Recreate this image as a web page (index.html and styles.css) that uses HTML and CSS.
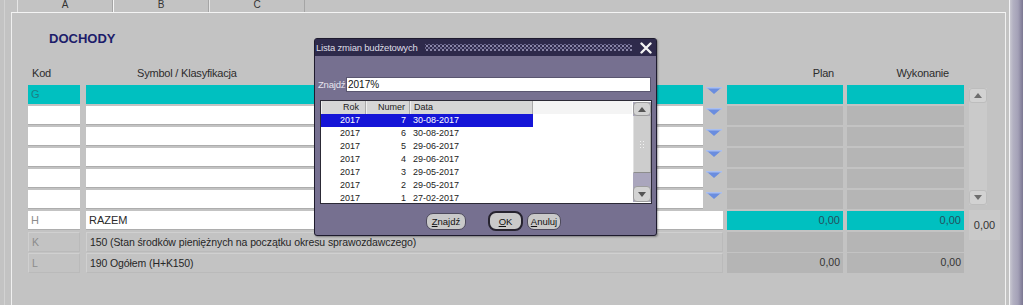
FILE: index.html
```html
<!DOCTYPE html>
<html>
<head>
<meta charset="utf-8">
<link rel="stylesheet" href="styles.css">
</head>
<body>
<div class="page">
  <div class="main">
    <div class="tabs">
      <div class="tab">A</div>
      <div class="tab tab-b">B</div>
      <div class="tab">C</div>
    </div>
    <div class="panel">
      <div class="title">DOCHODY</div>
      <div class="heads">
        <div class="h-kod">Kod</div>
        <div class="h-sym">Symbol / Klasyfikacja</div>
        <div class="h-plan">Plan</div>
        <div class="h-wyk">Wykonanie</div>
      </div>
      <div class="block">
        <div class="rows">
          <div class="row">
            <div class="c kod teal">G</div><div class="c sym teal"></div>
            <div class="arr"><svg width="16" height="7" viewBox="0 0 16 7"><polygon points="0,0 16,0 8,7" class="tri"/><rect x="0" y="0" width="16" height="1.5" fill="#a9bff0"/></svg></div>
            <div class="c plan teal"></div><div class="c wyk teal"></div>
          </div>
          <div class="row">
            <div class="c kod white"></div><div class="c sym white"></div>
            <div class="arr"><svg width="16" height="7" viewBox="0 0 16 7"><polygon points="0,0 16,0 8,7" class="tri"/><rect x="0" y="0" width="16" height="1.5" fill="#a9bff0"/></svg></div>
            <div class="c plan gray"></div><div class="c wyk gray"></div>
          </div>
          <div class="row">
            <div class="c kod white"></div><div class="c sym white"></div>
            <div class="arr"><svg width="16" height="7" viewBox="0 0 16 7"><polygon points="0,0 16,0 8,7" class="tri"/><rect x="0" y="0" width="16" height="1.5" fill="#a9bff0"/></svg></div>
            <div class="c plan gray"></div><div class="c wyk gray"></div>
          </div>
          <div class="row">
            <div class="c kod white"></div><div class="c sym white"></div>
            <div class="arr"><svg width="16" height="7" viewBox="0 0 16 7"><polygon points="0,0 16,0 8,7" class="tri"/><rect x="0" y="0" width="16" height="1.5" fill="#a9bff0"/></svg></div>
            <div class="c plan gray"></div><div class="c wyk gray"></div>
          </div>
          <div class="row">
            <div class="c kod white"></div><div class="c sym white"></div>
            <div class="arr"><svg width="16" height="7" viewBox="0 0 16 7"><polygon points="0,0 16,0 8,7" class="tri"/><rect x="0" y="0" width="16" height="1.5" fill="#a9bff0"/></svg></div>
            <div class="c plan gray"></div><div class="c wyk gray"></div>
          </div>
          <div class="row">
            <div class="c kod white"></div><div class="c sym white"></div>
            <div class="arr"><svg width="16" height="7" viewBox="0 0 16 7"><polygon points="0,0 16,0 8,7" class="tri"/><rect x="0" y="0" width="16" height="1.5" fill="#a9bff0"/></svg></div>
            <div class="c plan gray"></div><div class="c wyk gray"></div>
          </div>
        </div>
        <div class="vscroll">
          <div class="sbtn"><svg width="8" height="5" viewBox="0 0 8 5"><polygon points="0,5 8,5 4,0" fill="#6e6e6e"/></svg></div>
          <div class="strack"></div>
          <div class="sbtn"><svg width="8" height="5" viewBox="0 0 8 5"><polygon points="0,0 8,0 4,5" fill="#6e6e6e"/></svg></div>
        </div>
      </div>
      <div class="row total">
        <div class="c kod white dim">H</div><div class="c sym wide white">RAZEM</div>
        <div class="c plan teal num">0,00</div><div class="c wyk teal num">0,00</div>
        <div class="sum">0,00</div>
      </div>
      <div class="row info">
        <div class="c kod flat dim">K</div><div class="c sym wide flat">150 (Stan środków pieniężnych na początku okresu sprawozdawczego)</div>
        <div class="c plan gray"></div><div class="c wyk gray"></div>
      </div>
      <div class="row info">
        <div class="c kod flat dim">L</div><div class="c sym wide flat">190 Ogółem (H+K150)</div>
        <div class="c plan gray num dark">0,00</div><div class="c wyk gray num dark">0,00</div>
      </div>
    </div>
  </div>
  <div class="rstrip"></div>
</div>

<div class="dialog">
  <div class="dtitle">
    <span class="dtext">Lista zmian budżetowych</span>
    <span class="dots"></span>
    <svg class="close" width="12" height="12" viewBox="0 0 12 12"><path d="M1.5 1.5 L10.5 10.5 M10.5 1.5 L1.5 10.5" stroke="#f4f4f4" stroke-width="2.4" stroke-linecap="round"/></svg>
  </div>
  <div class="findrow">
    <span class="flabel">Znajdź</span>
    <div class="finput">2017%</div>
  </div>
  <div class="list">
    <div class="lcols">
      <div class="lrow lhead">
        <div class="lc rok">Rok</div><div class="lc numer">Numer</div><div class="lc data">Data</div><div class="lc rest"></div>
      </div>
      <div class="lrow sel"><div class="lc rok">2017</div><div class="lc numer">7</div><div class="lc data">30-08-2017</div></div>
      <div class="lrow"><div class="lc rok">2017</div><div class="lc numer">6</div><div class="lc data">30-08-2017</div></div>
      <div class="lrow"><div class="lc rok">2017</div><div class="lc numer">5</div><div class="lc data">29-06-2017</div></div>
      <div class="lrow"><div class="lc rok">2017</div><div class="lc numer">4</div><div class="lc data">29-06-2017</div></div>
      <div class="lrow"><div class="lc rok">2017</div><div class="lc numer">3</div><div class="lc data">29-05-2017</div></div>
      <div class="lrow"><div class="lc rok">2017</div><div class="lc numer">2</div><div class="lc data">29-05-2017</div></div>
      <div class="lrow"><div class="lc rok">2017</div><div class="lc numer">1</div><div class="lc data">27-02-2017</div></div>
    </div>
    <div class="lscroll">
      <div class="lbtn"><svg width="8" height="5" viewBox="0 0 8 5"><polygon points="0,5 8,5 4,0" fill="#555"/></svg></div>
      <div class="lthumb"><span class="grip"></span></div>
      <div class="ltrack"></div>
      <div class="lbtn down"><svg width="8" height="5" viewBox="0 0 8 5"><polygon points="0,0 8,0 4,5" fill="#555"/></svg></div>
    </div>
  </div>
  <div class="btnrow">
    <div class="btn b-find"><u>Z</u>najdź</div>
    <div class="btn b-ok"><u>O</u>K</div>
    <div class="btn b-cancel"><u>A</u>nuluj</div>
  </div>
</div>
</body>
</html>
```

FILE: styles.css
```css
html, body {
  margin: 0;
  padding: 0;
}
body {
  width: 1023px;
  height: 305px;
  overflow: hidden;
  background: #c3c3c3;
  font-family: "Liberation Sans", Arial, sans-serif;
  color: #2a2a2a;
  position: relative;
}
.page {
  display: flex;
  height: 305px;
  background: linear-gradient(to right, transparent 4px, #d2d2d2 4px, #d2d2d2 5px, transparent 5px);
}
.main {
  width: 1009px;
  display: flex;
  flex-direction: column;
}
.rstrip {
  width: 14px;
  background: linear-gradient(to right, #f2f2f4 0px, #f2f2f4 1px, #c9c8d1 1px, #b3b1c2 4px, #a4a1b7 9px, #7b7792 14px);
}
.tabs {
  height: 12px;
  display: flex;
  padding-left: 17px;
}
.tab {
  width: 94px;
  height: 12px;
  border-left: 1px solid #e6e6e6;
  border-right: 1px solid #a5a5a5;
  font-size: 10px;
  line-height: 9px;
  text-align: center;
  color: #333;
  overflow: hidden;
}
.tab-b {
  border-left: 1px solid #f6f6f6;
}
.panel {
  flex: 1;
  margin-left: 11px;
  margin-right: 3px;
  border-top: 1px solid #f4f4f4;
  border-left: 1px solid #f0f0f0;
  border-right: 1px solid #f0f0f0;
  padding-left: 16px;
}
.title {
  margin-top: 18px;
  margin-left: 21px;
  font-size: 13px;
  line-height: 15px;
  font-weight: bold;
  color: #1c1c6a;
}
.heads {
  margin-top: 20px;
  height: 14px;
  display: flex;
  font-size: 11px;
  line-height: 14px;
  letter-spacing: -0.2px;
  color: #2c2c2c;
}
.h-kod {
  width: 52px;
  padding-left: 4px;
  box-sizing: border-box;
}
.h-sym {
  width: 641px;
  padding-left: 57px;
  box-sizing: border-box;
}
.h-plan {
  width: 116px;
  margin-left: 4px;
  text-align: right;
  padding-right: 7px;
  box-sizing: border-box;
}
.h-wyk {
  width: 117px;
  margin-left: 4px;
  text-align: right;
  padding-right: 13px;
  box-sizing: border-box;
}
.block {
  margin-top: 5px;
  display: flex;
}
.rows {
  width: 936px;
}
.row {
  display: flex;
  height: 19px;
  margin-bottom: 2px;
}
.row.info {
  height: 20px;
  margin-bottom: 1px;
}
.c {
  box-sizing: border-box;
  height: 100%;
  font-size: 11px;
  line-height: 19px;
  padding-left: 3px;
  white-space: nowrap;
  overflow: hidden;
}
.kod { width: 52px; }
.sym { width: 617px; margin-left: 6px; }
.sym.wide { width: 637px; }
.plan { width: 116px; margin-left: 4px; }
.wyk { width: 117px; margin-left: 4px; }
.arr {
  width: 20px;
  padding-left: 3px;
  padding-top: 2px;
  box-sizing: border-box;
}
.arr svg { display: block; }
.tri { fill: #6a8ddf; }
.teal {
  background: #00c0c0;
  color: #1d6a6e;
}
.white {
  background: #fff;
  border-bottom: 1px solid #adadad;
}
.gray {
  background: #b5b5b5;
}
.flat {
  background: #c3c3c3;
  border: 1px solid #d0d0d0;
  border-right-color: #bababa;
  border-bottom-color: #bababa;
  line-height: 18px;
  color: #262626;
}
.dim { color: #8c8c8c; }
.kod.teal { color: #1b7f85; }
.num {
  text-align: right;
  padding-right: 3px;
  color: #24505e;
}
.num.dark { color: #333; }
.info .c { font-size: 10.5px; }
.info .sym { letter-spacing: -0.1px; }
.sum {
  width: 31px;
  height: 30px;
  margin-left: 5px;
  margin-top: -1px;
  background: #c9c9c9;
  font-size: 11px;
  display: flex;
  align-items: center;
  justify-content: center;
  color: #333;
  flex: none;
}
.vscroll {
  margin-left: 5px;
  margin-top: 3px;
  width: 18px;
  height: 117px;
  display: flex;
  flex-direction: column;
  background: #cacaca;
}
.sbtn {
  height: 15px;
  background: #d2d2d2;
  border: 1px solid #bdbdbd;
  border-radius: 3px;
  box-sizing: border-box;
  display: flex;
  align-items: center;
  justify-content: center;
}
.strack { flex: 1; }

/* dialog */
.dialog {
  position: absolute;
  left: 314px;
  top: 38px;
  width: 343px;
  height: 198px;
  box-sizing: border-box;
  border: 1px solid #1e1b2e;
  border-radius: 3px;
  background: #767090;
  box-shadow: 1px 1px 2px rgba(0,0,0,0.35);
}
.dtitle {
  height: 17px;
  background: #2e2a4b;
  display: flex;
  align-items: center;
  padding-left: 1px;
}
.dtext {
  font-size: 9.5px;
  letter-spacing: -0.2px;
  color: #dedde6;
}
.dots {
  flex: 1;
  height: 7px;
  margin-left: 7px;
  margin-right: 8px;
  background-image: radial-gradient(circle, #8d89aa 0.7px, transparent 1px), radial-gradient(circle, #6d6990 0.7px, transparent 1px);
  background-size: 4px 4px, 4px 4px;
  background-position: 0 0, 2px 2px;
}
.close {
  margin-right: 4px;
  display: block;
}
.findrow {
  margin-top: 21px;
  display: flex;
  align-items: center;
  padding-left: 3px;
}
.flabel {
  width: 28px;
  font-size: 9.5px;
  color: #e6e5ee;
  letter-spacing: -0.2px;
}
.finput {
  width: 305px;
  height: 15px;
  background: #fff;
  box-sizing: border-box;
  border: 1px solid #5a5670;
  font-size: 10px;
  line-height: 13px;
  padding-left: 1px;
  color: #111;
}
.list {
  margin-top: 8px;
  margin-left: 5px;
  width: 332px;
  height: 104px;
  box-sizing: border-box;
  border: 1px solid #2c2a36;
  background: #fff;
  display: flex;
  overflow: hidden;
}
.lcols {
  flex: 1;
  overflow: hidden;
}
.lrow {
  display: flex;
  height: 13px;
  font-size: 9px;
  line-height: 13px;
  color: #222;
}
.lc {
  box-sizing: border-box;
  white-space: nowrap;
}
.rok { width: 45px; text-align: right; padding-right: 6px; }
.numer { width: 44px; text-align: right; padding-right: 4px; }
.data { width: 123px; padding-left: 3px; }
.rest { flex: 1; }
.lhead .lc {
  background: #d6d6d6;
  border-right: 1px solid #a9a9a9;
  border-left: 1px solid #efefef;
}
.lhead .rest {
  background: #f4f4f4;
  border: none;
}
.sel .lc {
  background: #1515d7;
  color: #fff;
}
.lscroll {
  width: 18px;
  margin: 1px 0 1px 1px;
  display: flex;
  flex-direction: column;
  background: #aaa6bd;
}
.lbtn {
  height: 14px;
  background: #d3d3d3;
  border: 1px solid #9d9d9d;
  border-radius: 4px;
  box-sizing: border-box;
  display: flex;
  align-items: center;
  justify-content: center;
}
.lbtn.down { height: 16px; }
.lthumb {
  height: 57px;
  background: #cdcdcd;
  border-left: 1px solid #e2e2e2;
  border-right: 1px solid #a5a5a5;
  border-bottom: 1px solid #8d8d8d;
  box-sizing: border-box;
  display: flex;
  align-items: center;
  justify-content: center;
}
.grip {
  width: 6px;
  height: 9px;
  background-image: radial-gradient(circle, #f2f2f2 0.8px, transparent 1px);
  background-size: 3px 3px;
}
.ltrack { flex: 1; }
.btnrow {
  margin-top: 7px;
  height: 20px;
  display: flex;
  align-items: center;
  padding-left: 111px;
}
.btn {
  box-sizing: border-box;
  height: 17px;
  background: #c9c9c9;
  border: 1px solid #4d4a5c;
  border-radius: 7px;
  font-size: 9.5px;
  color: #111;
  display: flex;
  align-items: center;
  justify-content: center;
}
.b-find { width: 40px; }
.b-ok {
  width: 35px;
  height: 20px;
  margin-left: 22px;
  border: 2px solid #26232f;
  border-radius: 8px;
}
.b-cancel {
  width: 34px;
  margin-left: 4px;
}
```
